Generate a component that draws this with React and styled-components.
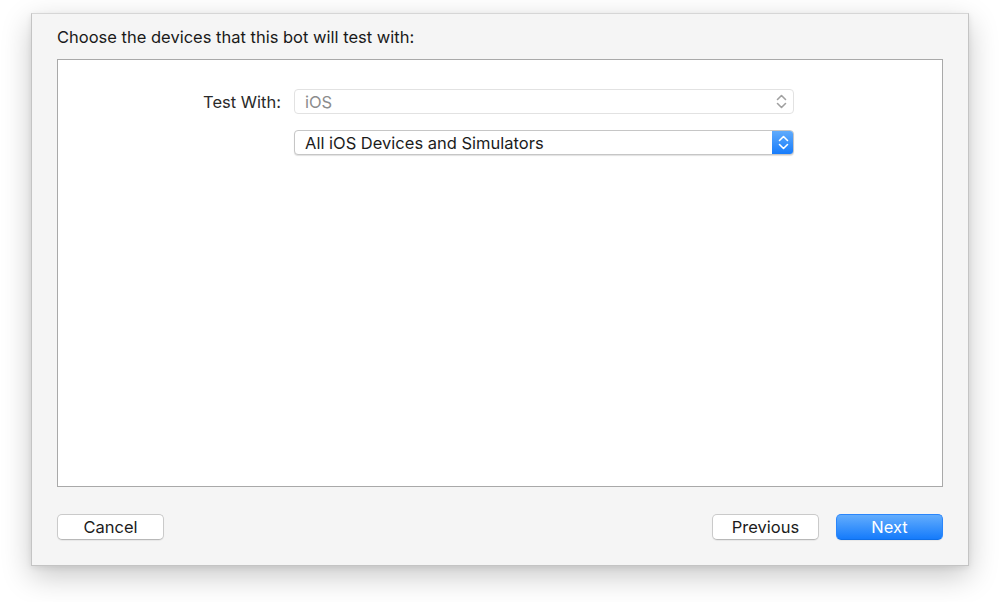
import React from "react";
import styled, { createGlobalStyle } from "styled-components";

const GlobalStyle = createGlobalStyle`
  html, body {
    margin: 0;
    padding: 0;
    background: #ffffff;
    min-height: 602px;
  }
  body {
    font-family: "Inter", "Liberation Sans", Arial, sans-serif;
    -webkit-font-smoothing: antialiased;
  }
  * {
    box-sizing: border-box;
  }
`;

function Chevrons({ color }) {
  return (
    <svg width="11" height="17" viewBox="0 0 11 17" fill="none">
      <path
        d="M1.5 6.5 L5.5 2.5 L9.5 6.5"
        stroke={color}
        strokeWidth="1.6"
        strokeLinecap="round"
        strokeLinejoin="round"
      />
      <path
        d="M1.5 10.5 L5.5 14.5 L9.5 10.5"
        stroke={color}
        strokeWidth="1.6"
        strokeLinecap="round"
        strokeLinejoin="round"
      />
    </svg>
  );
}

export default function App() {
  return (
    <>
      <GlobalStyle />
      <StyledPage>
        <StyledSheet>
          <StyledTitle>Choose the devices that this bot will test with:</StyledTitle>
          <StyledContentBox>
            <StyledFormGrid>
              <StyledLabel>Test With:</StyledLabel>
              <StyledPopup disabled>
                <span>iOS</span>
                <StyledPlainArrows>
                  <Chevrons color="#a0a0a0" />
                </StyledPlainArrows>
              </StyledPopup>
              <span />
              <StyledPopup>
                <span>All iOS Devices and Simulators</span>
                <StyledBlueArrows>
                  <Chevrons color="#ffffff" />
                </StyledBlueArrows>
              </StyledPopup>
            </StyledFormGrid>
          </StyledContentBox>
          <StyledButtonBar>
            <StyledButton>Cancel</StyledButton>
            <StyledRightButtons>
              <StyledButton>Previous</StyledButton>
              <StyledButton primary>Next</StyledButton>
            </StyledRightButtons>
          </StyledButtonBar>
        </StyledSheet>
      </StyledPage>
    </>
  );
}

const StyledPage = styled.div`
  width: 1000px;
  height: 602px;
  padding: 13px 0 0 31px;
  overflow: hidden;
`;

const StyledSheet = styled.div`
  width: 938px;
  height: 553px;
  background: #f5f5f5;
  border: 1px solid #c4c4c4;
  border-top-color: #d6d6d6;
  box-shadow: 0 10px 28px rgba(0, 0, 0, 0.22), 0 2px 6px rgba(0, 0, 0, 0.08);
  padding: 13px 25px 25px 25px;
  display: flex;
  flex-direction: column;
`;

const StyledTitle = styled.div`
  font-size: 16.5px;
  line-height: 20px;
  color: #1a1a1a;
  margin-bottom: 12px;
`;

const StyledContentBox = styled.div`
  height: 428px;
  background: #ffffff;
  border: 1px solid #a9a9a9;
  padding-top: 29px;
`;

const StyledFormGrid = styled.div`
  display: grid;
  grid-template-columns: 224px 500px;
  column-gap: 12px;
  row-gap: 16px;
  align-items: center;
`;

const StyledLabel = styled.div`
  text-align: right;
  font-size: 16.5px;
  color: #2a2a2a;
  padding-right: 1px;
`;

const StyledPopup = styled.div`
  height: 25px;
  border-radius: 4px;
  background: #ffffff;
  border: 1px solid ${(props) => (props.disabled ? "#e2e2e2" : "#c6c6c6")};
  box-shadow: ${(props) =>
    props.disabled ? "none" : "0 1px 1px rgba(0, 0, 0, 0.12)"};
  display: flex;
  align-items: center;
  justify-content: space-between;
  padding-left: 10px;
  font-size: 16.5px;
  color: ${(props) => (props.disabled ? "#8c8c8c" : "#1c1c1c")};
  overflow: hidden;
`;

const StyledPlainArrows = styled.div`
  width: 22px;
  height: 100%;
  display: flex;
  align-items: center;
  justify-content: center;
  margin-right: 1px;
`;

const StyledBlueArrows = styled.div`
  width: 22px;
  height: 100%;
  display: flex;
  align-items: center;
  justify-content: center;
  background: linear-gradient(to bottom, #60abfc, #177cfb);
  margin-right: -1px;
`;

const StyledButtonBar = styled.div`
  margin-top: 27px;
  display: flex;
  justify-content: space-between;
  align-items: center;
`;

const StyledRightButtons = styled.div`
  display: flex;
  gap: 17px;
`;

const StyledButton = styled.button`
  width: 107px;
  height: 26px;
  border-radius: 5px;
  font-family: "Inter", "Liberation Sans", Arial, sans-serif;
  font-size: 16.5px;
  padding: 0;
  color: ${(props) => (props.primary ? "#ffffff" : "#1c1c1c")};
  background: ${(props) =>
    props.primary
      ? "linear-gradient(to bottom, #63adfd, #157bfb)"
      : "#ffffff"};
  border: 1px solid ${(props) => (props.primary ? "#2a86fb" : "#cacaca")};
  border-bottom-color: ${(props) => (props.primary ? "#0f6fe8" : "#b8b8b8")};
  box-shadow: 0 1px 1px rgba(0, 0, 0, 0.06);
`;
